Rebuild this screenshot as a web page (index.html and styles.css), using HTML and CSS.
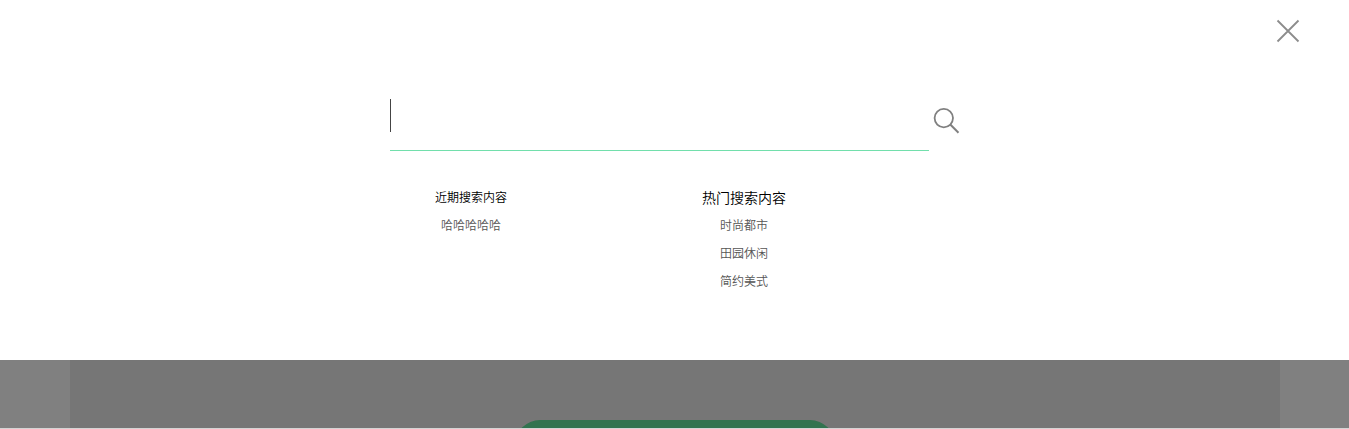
FILE: index.html
```html
<!DOCTYPE html>
<html lang="zh-CN">
<head>
<meta charset="utf-8">
<title>搜索</title>
<link rel="stylesheet" href="styles.css">
</head>
<body>
<section class="search-panel">
  <header class="panel-top">
    <svg class="close" width="24" height="24" viewBox="0 0 24 24"><path d="M1.5 1.5l21 21M22.5 1.5l-21 21"/></svg>
  </header>
  <div class="search-row">
    <div class="search-field"><span class="caret"></span></div>
    <svg class="search-icon" width="28" height="28" viewBox="0 0 28 28"><circle cx="10.8" cy="11.1" r="9.2"/><path class="handle" d="M17.3 17.5l8.2 8.2"/></svg>
  </div>
  <div class="lists">
    <ul class="list">
      <li class="title">近期搜索内容</li>
      <li>哈哈哈哈哈</li>
    </ul>
    <ul class="list hot">
      <li class="title">热门搜索内容</li>
      <li>时尚都市</li>
      <li>田园休闲</li>
      <li>简约美式</li>
    </ul>
  </div>
</section>
<main class="backdrop">
  <div class="content"><div class="button"></div></div>
</main>
</body>
</html>
```
FILE: styles.css
```css
* { box-sizing: border-box; }
body {
  margin: 0;
  height: 429px;
  overflow: hidden;
  background: #d4d4d4;
  font-family: "Noto Sans CJK SC", sans-serif;
}
.search-panel { height: 360px; background: #fff; }
.panel-top {
  display: flex;
  justify-content: flex-end;
  height: 98px;
  padding: 19px 49px 0 0;
}
.close { fill: none; stroke: #8c8c8c; stroke-width: 1.8; }
.search-row { display: flex; height: 53px; margin-left: 390px; }
.search-field { width: 539px; padding-top: 1px; border-bottom: 1px solid #72dfac; }
.caret { display: block; width: 1px; height: 33px; background: #444; }
.search-icon { margin: 9px 0 0 4px; fill: none; stroke: #808080; stroke-width: 1.8; }
.handle { stroke-width: 2; }
.lists {
  display: grid;
  grid-template-columns: 162px 162px;
  column-gap: 111px;
  margin-left: 390px;
  padding-top: 32px;
}
.list {
  margin: 0;
  padding: 0;
  list-style: none;
  text-align: center;
  font-size: 12px;
  font-weight: 350;
  line-height: 28px;
  color: #555;
}
.list .title { color: #000; }
.hot .title { font-size: 14px; }
.backdrop { height: 68px; padding: 0 69px 0 70px; background: #808080; overflow: hidden; }
.content { height: 68px; padding-top: 60px; background: #767676; }
.button { width: 320px; height: 50px; margin: 0 auto; border-radius: 25px; background: #31734f; }
```
